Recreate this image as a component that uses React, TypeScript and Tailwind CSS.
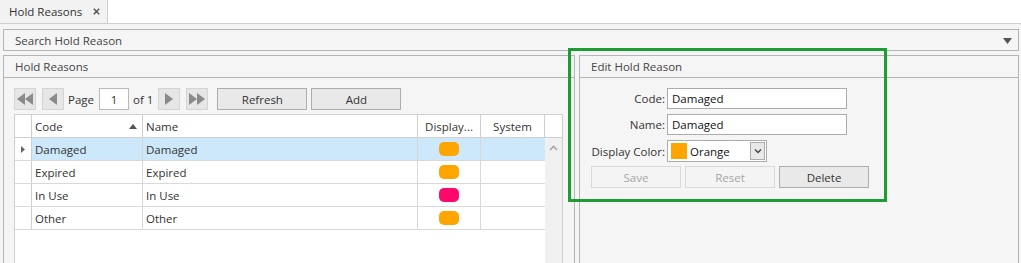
import React from "react";

type Row = { code: string; name: string; color: string };

const rows: Row[] = [
  { code: "Damaged", name: "Damaged", color: "#ffa500" },
  { code: "Expired", name: "Expired", color: "#ffa500" },
  { code: "In Use", name: "In Use", color: "#ff0a6c" },
  { code: "Other", name: "Other", color: "#ffa500" },
];

const TriLeft = () => (
  <svg width="8" height="12" viewBox="0 0 8 12">
    <path d="M8 0 L0 6 L8 12 Z" fill="#8a8a8a" />
  </svg>
);
const TriRight = () => (
  <svg width="8" height="12" viewBox="0 0 8 12">
    <path d="M0 0 L8 6 L0 12 Z" fill="#8a8a8a" />
  </svg>
);

const PagerBtn = ({ children }: { children: React.ReactNode }) => (
  <div className="flex h-[22px] w-[22px] items-center justify-center border border-[#d4d4d4] bg-[#e6e6e6]">
    {children}
  </div>
);

const Button = ({ label, disabled }: { label: string; disabled?: boolean }) => (
  <div
    className={
      disabled
        ? "flex h-[22px] w-[90px] items-center justify-center border border-[#d9d9d9] bg-[#f4f4f4] pt-[1px] text-[#a6a6a6]"
        : "flex h-[22px] w-[90px] items-center justify-center border border-[#adadad] bg-[#e9e9e9] pt-[1px] text-[#333]"
    }
  >
    {label}
  </div>
);

const PanelHeader = ({ title }: { title: string }) => (
  <div className="flex h-[22px] items-center border-b border-[#b5b5b5] pl-[11px] pt-[1px] text-[#444]">{title}</div>
);

export default function App() {
  return (
    <div
      className="relative h-[263px] w-[1021px] overflow-hidden bg-[#f5f5f5] text-[11.5px] text-[#333]"
      style={{ fontFamily: '"Open Sans", "Noto Sans", sans-serif' }}
    >
      {/* tab strip */}
      <div className="flex h-[24px] border-b border-[#cfcfcf] bg-white">
        <div className="flex h-full w-[108px] items-center border-r border-[#cfcfcf] bg-[#f2f2f2] pl-[9px] text-[#333]">
          <span>Hold Reasons</span>
          <svg className="ml-[11px]" width="7" height="7" viewBox="0 0 7 7">
            <path d="M0.8 0.8 L6.2 6.2 M6.2 0.8 L0.8 6.2" stroke="#555" strokeWidth="1.5" />
          </svg>
        </div>
      </div>

      <div className="pl-[3px] pr-[2px] pt-[5px]">
        {/* search expander */}
        <div className="flex h-[22px] items-center justify-between border border-[#b5b5b5] bg-[#f5f5f5] pl-[11px] pr-[6px] pt-[1px] text-[#444]">
          <span>Search Hold Reason</span>
          <svg width="9" height="6" viewBox="0 0 9 6">
            <path d="M0 0 L9 0 L4.5 6 Z" fill="#555" />
          </svg>
        </div>

        <div className="mt-[4px] flex gap-[4px]">
          {/* left panel */}
          <div className="h-[250px] w-[572px] border border-[#b5b5b5] bg-[#f5f5f5]">
            <PanelHeader title="Hold Reasons" />
            <div className="px-[10px] pt-[10px]">
              <div className="flex items-center">
                <PagerBtn>
                  <div className="flex">
                    <TriLeft />
                    <TriLeft />
                  </div>
                </PagerBtn>
                <div className="ml-[6px]">
                  <PagerBtn>
                    <TriLeft />
                  </PagerBtn>
                </div>
                <span className="ml-[4px] pt-[1px]">Page</span>
                <div className="ml-[5px] flex h-[22px] w-[30px] items-center justify-center border border-[#b8b8b8] bg-white pt-[1px]">1</div>
                <span className="ml-[4px] pt-[1px]">of 1</span>
                <div className="ml-[5px]">
                  <PagerBtn>
                    <TriRight />
                  </PagerBtn>
                </div>
                <div className="ml-[6px]">
                  <PagerBtn>
                    <div className="flex">
                      <TriRight />
                      <TriRight />
                    </div>
                  </PagerBtn>
                </div>
                <div className="ml-[9px] flex gap-[4px]">
                  <Button label="Refresh" />
                  <Button label="Add" />
                </div>
              </div>

              {/* grid */}
              <div className="mt-[4px] flex h-[170px] w-[549px] border border-[#cfcfcf] bg-white">
                <div className="w-[530px]">
                  <div className="grid grid-cols-[17px_111px_275px_63px_64px] border-b border-[#cfcfcf]">
                    <div className="h-[22px] border-r border-[#cfcfcf]" />
                    <div className="flex h-[22px] items-center justify-between border-r border-[#cfcfcf] pl-[3px] pr-[5px] pt-[1px]">
                      <span>Code</span>
                      <svg width="8" height="5" viewBox="0 0 8 5">
                        <path d="M0 5 L4 0 L8 5 Z" fill="#555" />
                      </svg>
                    </div>
                    <div className="flex h-[22px] items-center border-r border-[#cfcfcf] pl-[3px] pt-[1px]">Name</div>
                    <div className="flex h-[22px] items-center justify-center border-r border-[#cfcfcf] pt-[1px]">Display...</div>
                    <div className="flex h-[22px] items-center justify-center border-r border-[#cfcfcf] pt-[1px]">System</div>
                  </div>
                  {rows.map((r, i) => (
                    <div
                      key={r.code}
                      className="grid grid-cols-[17px_111px_275px_63px_64px] border-b border-[#d9d9d9]"
                    >
                      <div className="flex h-[22px] items-center justify-center border-r border-[#cfcfcf] bg-white">
                        {i === 0 && (
                          <svg width="4" height="7" viewBox="0 0 4 7">
                            <path d="M0 0 L4 3.5 L0 7 Z" fill="#666" />
                          </svg>
                        )}
                      </div>
                      <div className={`flex h-[22px] items-center border-r border-[#d9d9d9] pl-[3px] pt-[1px] ${i === 0 ? "bg-[#cde8fb]" : ""}`}>
                        {r.code}
                      </div>
                      <div className={`flex h-[22px] items-center border-r border-[#d9d9d9] pl-[3px] pt-[1px] ${i === 0 ? "bg-[#cde8fb]" : ""}`}>
                        {r.name}
                      </div>
                      <div className={`flex h-[22px] items-center justify-center border-r border-[#d9d9d9] ${i === 0 ? "bg-[#cde8fb]" : ""}`}>
                        <div className="h-[14px] w-[20px] rounded-[5px]" style={{ backgroundColor: r.color }} />
                      </div>
                      <div className={`h-[22px] ${i === 0 ? "bg-[#cde8fb]" : ""}`} />
                    </div>
                  ))}
                </div>
                <div className="flex w-[17px] flex-col">
                  <div className="h-[23px] border-b border-[#cfcfcf]" />
                  <div className="flex flex-1 justify-center bg-[#f0f0f0] pt-[7px]">
                    <svg width="9" height="6" viewBox="0 0 9 6">
                      <path d="M1 5 L4.5 1.5 L8 5" fill="none" stroke="#a6a6a6" strokeWidth="1.6" />
                    </svg>
                  </div>
                </div>
              </div>
            </div>
          </div>

          {/* right panel */}
          <div className="h-[250px] w-[440px] border border-[#b5b5b5] bg-[#f5f5f5]">
            <PanelHeader title="Edit Hold Reason" />
            <div className="pl-[11px] pt-[10px]">
              <div className="grid grid-cols-[74px_auto] items-center gap-x-[2px] gap-y-[5px]">
                <div className="pt-[1px] text-right">Code:</div>
                <div className="flex h-[21px] w-[180px] items-center border border-[#acacac] bg-white pl-[4px] pt-[1px] text-[#111]">Damaged</div>
                <div className="pt-[1px] text-right">Name:</div>
                <div className="flex h-[21px] w-[180px] items-center border border-[#acacac] bg-white pl-[4px] pt-[1px] text-[#111]">Damaged</div>
                <div className="whitespace-nowrap pt-[1px] text-right">Display Color:</div>
                <div className="flex h-[22px] w-[100px] items-center border border-[#acacac] bg-white pl-[3px] text-[#111]">
                  <div className="h-[16px] w-[16px] bg-[#ffa500]" />
                  <span className="ml-[3px] flex-1 pt-[1px]">Orange</span>
                  <div className="mr-[1px] flex h-[18px] w-[15px] items-center justify-center border border-[#acacac] bg-[#e8e8e8]">
                    <svg width="8" height="6" viewBox="0 0 8 6">
                      <path d="M1 1.5 L4 4.5 L7 1.5" fill="none" stroke="#444" strokeWidth="1.4" />
                    </svg>
                  </div>
                </div>
              </div>
              <div className="mt-[4px] flex gap-[4px]">
                <Button label="Save" disabled />
                <Button label="Reset" disabled />
                <Button label="Delete" />
              </div>
            </div>
          </div>
        </div>
      </div>

      {/* annotation rectangle */}
      <div className="pointer-events-none absolute left-[568px] top-[48px] h-[154px] w-[319px] border-[3px] border-[#1f9d34]" />
    </div>
  );
}
